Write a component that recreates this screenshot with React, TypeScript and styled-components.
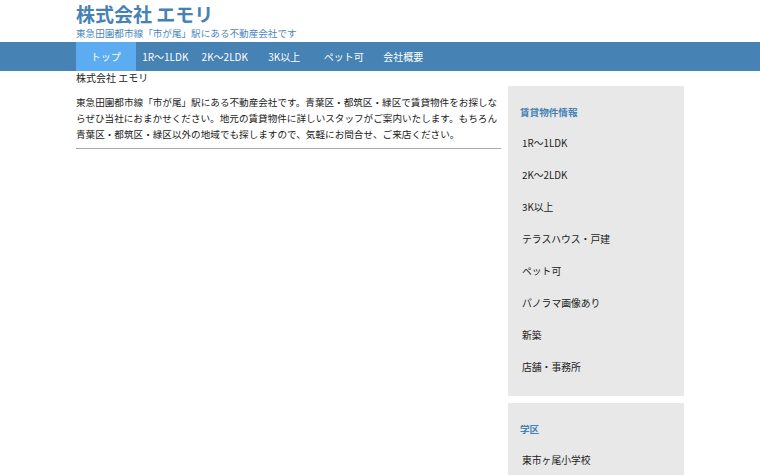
import React from "react";
import styled, { createGlobalStyle } from "styled-components";

const Global = createGlobalStyle`
  html, body { margin: 0; padding: 0; background: #fff; }
  body { font-family: "Noto Sans CJK JP", "Noto Sans", sans-serif; color: #222; }
`;

const Wrap = styled.div`
  width: 608px;
  margin: 0 auto;
`;

const Header = styled.header`
  padding: 2px 0 2px;
`;

const Title = styled.h1`
  margin: 0;
  font-size: 19px;
  line-height: 24px;
  font-weight: 700;
  color: #4682b4;
`;

const Sub = styled.p`
  margin: 0;
  font-size: 9.6px;
  line-height: 14px;
  color: #4a88bd;
`;

const NavBar = styled.nav`
  background: #4682b4;
  height: 29px;
`;

const NavList = styled.ul`
  display: flex;
  list-style: none;
  margin: 0 auto;
  padding: 0;
  width: 608px;
`;

const NavItem = styled.li<{ $active?: boolean }>`
  width: 59.5px;
  text-align: center;
  line-height: 29px;
  font-size: 10px;
  color: #fff;
  background: ${(p) => (p.$active ? "#5bacf0" : "transparent")};
`;

const Layout = styled.div`
  display: flex;
  gap: 7px;
  align-items: flex-start;
`;

const Main = styled.main`
  width: 425px;
`;

const Lead = styled.div`
  font-size: 10px;
  line-height: 14px;
  color: #222;
`;

const Para = styled.p`
  margin: 9px 0 6px;
  font-size: 9.6px;
  line-height: 16px;
  color: #222;
`;

const Rule = styled.hr`
  margin: 0;
  border: none;
  border-top: 1px solid #aaa;
`;

const Side = styled.aside`
  width: 176px;
  margin-top: 15px;
  display: flex;
  flex-direction: column;
  gap: 7px;
`;

const Box = styled.section`
  background: #e8e8e8;
  padding: 18px 0 13px;
`;

const BoxHead = styled.h3`
  margin: 0 0 7px;
  padding-left: 12px;
  font-size: 9.6px;
  line-height: 16px;
  font-weight: 700;
  color: #4682b4;
`;

const BoxList = styled.ul`
  list-style: none;
  margin: 0;
  padding: 0;
`;

const BoxItem = styled.li`
  padding-left: 14px;
  font-size: 9.8px;
  line-height: 32px;
  color: #222;
`;

const navItems = ["トップ", "1R〜1LDK", "2K〜2LDK", "3K以上", "ペット可", "会社概要"];
const rentItems = [
  "1R〜1LDK",
  "2K〜2LDK",
  "3K以上",
  "テラスハウス・戸建",
  "ペット可",
  "パノラマ画像あり",
  "新築",
  "店舗・事務所",
];

export default function App() {
  return (
    <>
      <Global />
      <Wrap>
        <Header>
          <Title>株式会社 エモリ</Title>
          <Sub>東急田園都市線「市が尾」駅にある不動産会社です</Sub>
        </Header>
      </Wrap>
      <NavBar>
        <NavList>
          {navItems.map((n, i) => (
            <NavItem key={n} $active={i === 0}>
              {n}
            </NavItem>
          ))}
        </NavList>
      </NavBar>
      <Wrap>
        <Layout>
          <Main>
            <Lead>株式会社 エモリ</Lead>
            <Para>
              東急田園都市線「市が尾」駅にある不動産会社です。青葉区・都筑区・緑区で賃貸物件をお探しならぜひ当社におまかせください。地元の賃貸物件に詳しいスタッフがご案内いたします。もちろん青葉区・都筑区・緑区以外の地域でも探しますので、気軽にお問合せ、ご来店ください。
            </Para>
            <Rule />
          </Main>
          <Side>
            <Box>
              <BoxHead>賃貸物件情報</BoxHead>
              <BoxList>
                {rentItems.map((t) => (
                  <BoxItem key={t}>{t}</BoxItem>
                ))}
              </BoxList>
            </Box>
            <Box>
              <BoxHead>学区</BoxHead>
              <BoxList>
                <BoxItem>東市ヶ尾小学校</BoxItem>
              </BoxList>
            </Box>
          </Side>
        </Layout>
      </Wrap>
    </>
  );
}
